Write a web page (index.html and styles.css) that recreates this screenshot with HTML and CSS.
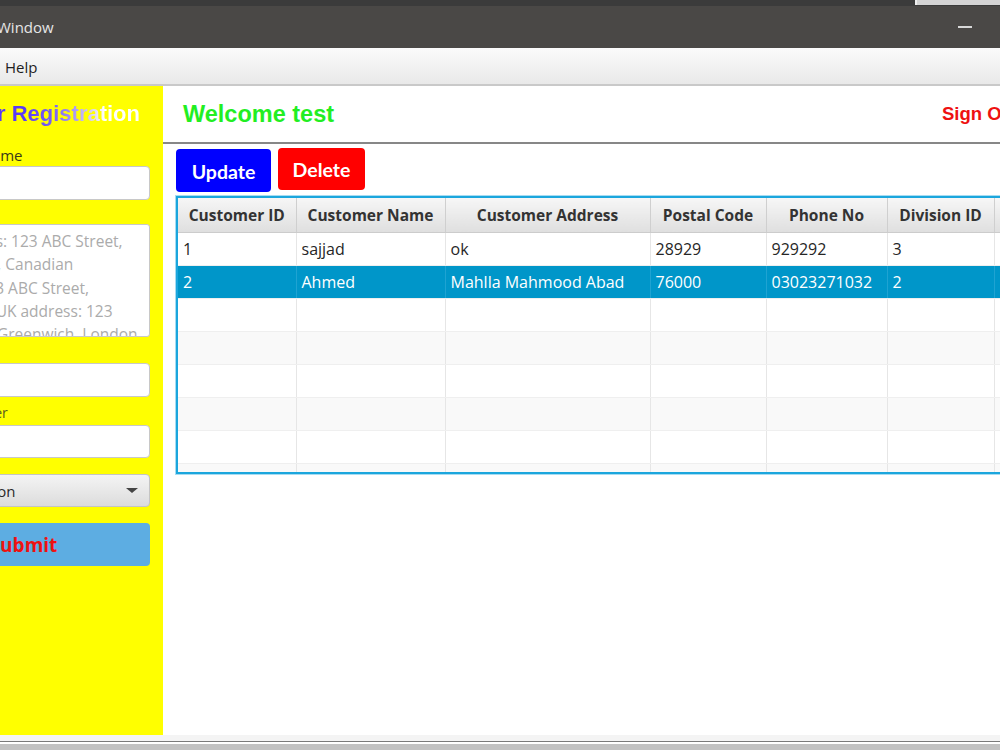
FILE: index.html
```html
<!DOCTYPE html>
<html lang="en">
<head>
  <meta charset="UTF-8">
  <title>Customer Window</title>
  <link rel="stylesheet" href="styles.css">
</head>
<body>

  <!-- window chrome -->
  <div class="topstrip"><div class="other-window"></div></div>
  <div class="titlebar">
    <span class="title">Window</span>
    <span class="minimize"></span>
  </div>
  <div class="menubar">
    <span class="menu">Help</span>
  </div>

  <div class="app">
    <!-- Registration form -->
    <div class="sidebar">
      <div class="form">
        <div class="form-title">Customer Registration</div>
        <label class="lbl lbl-name">Customer Name</label>
        <input class="field">
        <label class="lbl">Address</label>
        <textarea class="area" placeholder="USA address: 123 ABC Street,&#10;Los Angeles, Canadian&#10;address: 123 ABC Street,&#10;Edmonton, UK address: 123&#10;ABC Street, Greenwich, London"></textarea>
        <label class="lbl lbl-postal">Postal Code</label>
        <input class="field">
        <label class="lbl lbl-small">Phone Number</label>
        <input class="field field-short">
        <div class="combo">
          <span>Select Division</span>
          <span class="arrow"></span>
        </div>
        <button class="submit">Submit</button>
      </div>
    </div>

    <!-- Customers -->
    <div class="main">
      <div class="header">
        <span class="welcome">Welcome test</span>
        <span class="signout">Sign Out</span>
      </div>

      <div class="actions">
        <button class="btn btn-update">Update</button>
        <button class="btn btn-delete">Delete</button>
      </div>

      <div class="table-wrap">
        <table id="tablaClientes">
          <colgroup>
            <col style="width:118px">
            <col style="width:149px">
            <col style="width:205px">
            <col style="width:116px">
            <col style="width:121px">
            <col style="width:107px">
            <col style="width:110px">
          </colgroup>
          <thead>
            <tr>
              <th>Customer ID</th>
              <th>Customer Name</th>
              <th>Customer Address</th>
              <th>Postal Code</th>
              <th>Phone No</th>
              <th>Division ID</th>
              <th>Country</th>
            </tr>
          </thead>
          <tbody>
            <tr>
              <td>1</td><td>sajjad</td><td>ok</td><td>28929</td><td>929292</td><td>3</td><td></td>
            </tr>
            <tr class="selected">
              <td>2</td><td>Ahmed</td><td>Mahlla Mahmood Abad</td><td>76000</td><td>03023271032</td><td>2</td><td></td>
            </tr>
            <tr><td></td><td></td><td></td><td></td><td></td><td></td><td></td></tr>
            <tr><td></td><td></td><td></td><td></td><td></td><td></td><td></td></tr>
            <tr><td></td><td></td><td></td><td></td><td></td><td></td><td></td></tr>
            <tr><td></td><td></td><td></td><td></td><td></td><td></td><td></td></tr>
            <tr><td></td><td></td><td></td><td></td><td></td><td></td><td></td></tr>
            <tr class="last"><td></td><td></td><td></td><td></td><td></td><td></td><td></td></tr>
          </tbody>
        </table>
      </div>
    </div>
  </div>

  <div class="statusbar"></div>

</body>
</html>
```

FILE: styles.css
```css
body {
    margin: 0;
    width: 1000px;
    height: 750px;
    overflow: hidden;
    font-family: "Open Sans", "Noto Sans", sans-serif;
    background: #ffffff;
}

/* window chrome */
.topstrip {
    height: 6px;
    background: #3b3b3b;
    position: relative;
}
.other-window {
    position: absolute;
    left: 915px;
    top: 0;
    width: 85px;
    height: 5px;
    background: #d4d4d4;
    border-left: 2px solid #eeeeee;
}
.titlebar {
    height: 42px;
    background: #4a4846;
    display: flex;
    align-items: center;
    justify-content: space-between;
    color: #e6e6e6;
    font-size: 15px;
}
.title {
    margin-left: -3px;
}
.minimize {
    width: 14px;
    height: 2px;
    background: #d8d8d8;
    margin-right: 28px;
}
.menubar {
    height: 38px;
    box-sizing: border-box;
    background: linear-gradient(#fbfbfb, #e9e9e9);
    border-bottom: 2px solid #c9c9c9;
    display: flex;
    align-items: center;
}
.menu {
    margin-left: 5px;
    margin-top: 2px;
    font-size: 15px;
    color: #1e1e1e;
}

.app {
    display: flex;
    height: 649px;
}

/* sidebar form */
.sidebar {
    width: 163px;
    flex-shrink: 0;
    background: #ffff00;
    overflow: hidden;
    display: flex;
    justify-content: flex-end;
}
.form {
    width: 242px;
    flex-shrink: 0;
    margin-right: 13px;
    display: flex;
    flex-direction: column;
}
.form-title {
    margin-top: 14px;
    margin-left: -40px;
    height: 28px;
    line-height: 28px;
    text-align: right;
    padding-right: 10px;
    font-family: "Liberation Sans", Arial, sans-serif;
    font-weight: bold;
    font-size: 22px;
    white-space: nowrap;
    background: linear-gradient(90deg, #3a1fff 0%, #5b3cf5 55%, #7a62f2 66%, #b7a8f4 75%, #ffffff 84%);
    -webkit-background-clip: text;
    background-clip: text;
    color: transparent;
}
.lbl {
    height: 20px;
    line-height: 20px;
    margin-top: 3px;
    font-size: 15px;
    color: #3a3a1a;
    white-space: nowrap;
}
.lbl-name {
    margin-top: 17px;
}
.lbl-postal {
    margin-top: 5px;
}
.lbl-small {
    margin-top: 6px;
    font-size: 14px;
    color: #5a5a20;
}
.field {
    height: 34px;
    box-sizing: border-box;
    border: 1px solid #c8c8c8;
    border-radius: 4px;
    background: #ffffff;
    margin-top: 1px;
}
.field-short {
    height: 33px;
    margin-top: 2px;
}
.area {
    height: 113px;
    box-sizing: border-box;
    border: 1px solid #c8c8c8;
    border-radius: 3px;
    margin-top: 1px;
    padding: 5px 8px 5px 3px;
    resize: none;
    font-family: inherit;
    font-size: 15.5px;
    line-height: 23.3px;
    overflow: hidden;
    white-space: pre;
}
.area::placeholder {
    color: #ababab;
}
.combo {
    margin-top: 16px;
    height: 33px;
    box-sizing: border-box;
    border: 1px solid #c4c4c4;
    border-radius: 4px;
    background: linear-gradient(#f4f4f4, #dcdcdc);
    display: flex;
    align-items: center;
    justify-content: space-between;
    padding: 0 11px 0 6px;
    font-size: 15px;
    color: #2a2a2a;
    white-space: nowrap;
}
.arrow {
    width: 0;
    height: 0;
    border-left: 6px solid transparent;
    border-right: 6px solid transparent;
    border-top: 5px solid #444;
}
.submit {
    margin-top: 16px;
    height: 43px;
    border: none;
    border-radius: 4px;
    background: #5dade2;
    color: #ee1111;
    font-family: "Open Sans", sans-serif;
    font-weight: bold;
    font-size: 19px;
    text-align: center;
    padding: 0 11px 0 0;
}

/* main area */
.main {
    width: 1100px;
    flex-shrink: 0;
}
.header {
    height: 56px;
    border-bottom: 2px solid #878787;
    display: flex;
    align-items: center;
    font-family: "Liberation Sans", Arial, sans-serif;
    font-weight: bold;
}
.welcome {
    margin-left: 20px;
    font-size: 23.5px;
    color: #22ee22;
    width: 759px;
}
.signout {
    font-size: 18.5px;
    color: #ee1111;
}
.actions {
    display: flex;
    align-items: flex-start;
    gap: 7px;
    padding: 2px 0 0 13px;
    height: 52px;
    box-sizing: border-box;
}
.btn {
    border: none;
    border-radius: 4px;
    color: #ffffff;
    font-family: Lato, "Open Sans", sans-serif;
    font-weight: bold;
    font-size: 19.5px;
    padding: 0;
}
.btn-update {
    margin-top: 3px;
    width: 95px;
    height: 43px;
    background: #0000ff;
    padding-top: 2px;
}
.btn-delete {
    margin-top: 2px;
    width: 87px;
    height: 42px;
    background: #ff0000;
}

.table-wrap {
    margin-left: 13px;
    border: 2px solid #1ba6dd;
    width: 926px;
    box-shadow: 0 0 0 1px #a6dcf2;
}
table {
    border-collapse: collapse;
    table-layout: fixed;
    width: 926px;
}
th {
    height: 34px;
    padding: 0;
    background: linear-gradient(#f6f6f6, #dfdfdf);
    border-right: 1px solid #cfcfcf;
    border-bottom: 1px solid #cccccc;
    font-weight: bold;
    font-size: 15.5px;
    color: #333333;
    text-align: center;
    box-sizing: border-box;
    white-space: nowrap;
}
td {
    height: 33px;
    padding: 0 0 0 5px;
    border-right: 1px solid #e6e6e6;
    border-bottom: 1px solid #efefef;
    font-size: 16px;
    color: #262626;
    box-sizing: border-box;
    white-space: nowrap;
}
tbody tr:nth-child(even) {
    background: #f9f9f9;
}
tr.selected,
tbody tr.selected:nth-child(even) {
    background: #0096c9;
}
tr.selected td {
    color: #ffffff;
    border-right-color: #1fa3d2;
}
tr.last td {
    height: 9px;
    border-bottom: none;
}

.statusbar {
    height: 6px;
    background: #f4f4f4;
    border-bottom: 1px solid #7a7a7a;
    box-shadow: 0 9px 0 0 #c2c2c2;
}
```
